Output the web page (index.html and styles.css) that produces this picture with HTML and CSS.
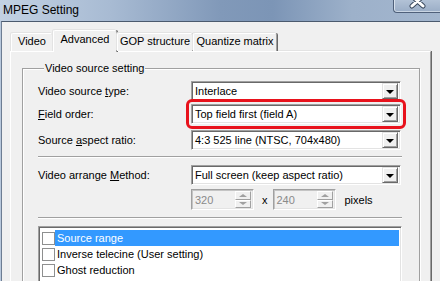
FILE: index.html
```html
<!DOCTYPE html>
<html>

<head>
    <meta charset="UTF-8">
    <meta name="viewport" content="width=device-width, initial-scale=1.0">
    <link rel="stylesheet" href="styles.css">
</head>

<body>
    <div class="window">
        <div class="titlebar">
            <span class="title">MPEG Setting</span>
            <div class="close-btn">
                <svg width="47" height="13" viewBox="0 0 47 13">
                    <path d="M19 -3 L30 7 M30 -3 L19 7" stroke="#3b4a5e" stroke-width="5" stroke-linecap="round" />
                    <path d="M19 -3 L30 7 M30 -3 L19 7" stroke="#fff" stroke-width="3" stroke-linecap="round" />
                </svg>
            </div>
        </div>

        <div class="client">
            <div class="tabs">
                <div class="tab tab-video">Video</div>
                <div class="tab tab-advanced active">Advanced</div>
                <div class="tab tab-gop">GOP structure</div>
                <div class="tab tab-quant">Quantize matrix</div>
            </div>

            <div class="panel">
                <fieldset class="group">
                    <legend>Video source setting</legend>

                    <div class="row row-first">
                        <label>Video source <u>t</u>ype:</label>
                        <div class="combo"><span class="combo-text">Interlace</span><span class="drop"></span></div>
                    </div>
                    <div class="row row-second">
                        <label><u>F</u>ield order:</label>
                        <div class="combo marked"><span class="combo-text">Top field first (field A)</span><span class="drop"></span></div>
                    </div>
                    <div class="row row-third">
                        <label>Source <u>a</u>spect ratio:</label>
                        <div class="combo"><span class="combo-text">4:3 525 line (NTSC, 704x480)</span><span class="drop"></span></div>
                    </div>

                    <div class="sep sep-first"></div>

                    <div class="row row-arrange">
                        <label>Video arrange <u>M</u>ethod:</label>
                        <div class="combo"><span class="combo-text">Full screen (keep aspect ratio)</span><span class="drop"></span></div>
                    </div>
                    <div class="spin-row">
                        <div class="spin"><span class="spin-text">320</span><span class="spin-btns"><span class="up"></span><span class="down"></span></span></div>
                        <span class="times">x</span>
                        <div class="spin"><span class="spin-text">240</span><span class="spin-btns"><span class="up"></span><span class="down"></span></span></div>
                        <span class="unit">pixels</span>
                    </div>

                    <div class="sep sep-second"></div>

                    <div class="list">
                        <div class="item selected"><span class="check"></span><span class="item-text">Source range</span></div>
                        <div class="item"><span class="check"></span><span class="item-text">Inverse telecine (User setting)</span></div>
                        <div class="item"><span class="check"></span><span class="item-text">Ghost reduction</span></div>
                    </div>
                </fieldset>
            </div>
        </div>
    </div>
</body>

</html>
```

FILE: styles.css
```css
html,
body {
    margin: 0;
    padding: 0;
    width: 440px;
    height: 281px;
    overflow: hidden;
}

body {
    font-family: "Liberation Sans", Arial, sans-serif;
    font-size: 11px;
    color: #000;
    background-color: #b8c8dc;
}

.window {
    width: 440px;
    height: 281px;
    display: flex;
    flex-direction: column;
}

/* Title bar (Aero basic look) */
.titlebar {
    height: 21px;
    flex: none;
    display: flex;
    align-items: flex-start;
    background: linear-gradient(to right, #c2d1e3 0%, #a8bbd3 25%, #8199b9 50%, #7c95b6 62%, #9db1ca 80%, #a3b6ce 100%);
}

.title {
    font-size: 12px;
    line-height: 12px;
    margin: 4px 0 0 3px;
    color: #000;
}

.close-btn {
    margin-left: auto;
    width: 47px;
    height: 13px;
    box-sizing: border-box;
    border: 1px solid #4f607a;
    border-top: none;
    border-right: none;
    border-radius: 0 0 0 4px;
    background: linear-gradient(#b2c2d6, #9aadc6);
    box-shadow: inset 1px 0 0 #d7e1ec, inset 0 -1px 0 #c9d5e3;
    overflow: hidden;
}

.close-btn svg {
    display: block;
    margin: -1px 0 0 -1px;
}

/* Client area */
.client {
    flex: 1;
    margin-left: 1px;
    border-left: 1px solid #6d7d93;
    border-top: 1px solid #4b5a6e;
    background-color: #f0f0f0;
    padding-left: 8px;
    padding-right: 9px;
}

/* Tabs */
.tabs {
    display: flex;
    align-items: flex-end;
    height: 21px;
    margin-top: 8px;
    padding-left: 1px;
    position: relative;
    z-index: 1;
}

.tab {
    box-sizing: border-box;
    height: 18px;
    line-height: 15px;
    text-align: center;
    border-top: 1px solid #fff;
    border-left: 1px solid #fff;
    border-right: 1px solid #a0a0a0;
    box-shadow: 1px 0 0 #696969, -1px -1px 0 #e3e3e3;
    border-radius: 2px 2px 0 0;
    background-color: #f0f0f0;
    white-space: nowrap;
}

.tab-video {
    width: 42px;
}

.tab-advanced {
    width: 64px;
}

.tab-gop {
    width: 76px;
}

.tab-quant {
    width: 84px;
}

.tab.active {
    height: 22px;
    margin-bottom: -1px;
    line-height: 15px;
    padding-top: 1px;
}

/* Tab panel */
.panel {
    height: 240px;
    box-sizing: border-box;
    border-top: 1px solid #fff;
    border-left: 1px solid #fff;
    border-right: 1px solid #a0a0a0;
    box-shadow: 1px 0 0 #696969, 0 -1px 0 #e3e3e3;
    padding: 10px 10px 0 11px;
}

/* Group box */
.group {
    margin: 0;
    padding: 6px 15px 0 15px;
    min-width: 0;
    height: 300px;
    border: 1px solid #a0a0a0;
    box-shadow: inset 1px 1px 0 #fff, 1px 1px 0 #fff;
}

.group legend {
    margin-left: 6px;
    padding: 0 1px;
    line-height: 13px;
    background-color: #f0f0f0;
}

/* Label + combo rows */
.row {
    display: grid;
    grid-template-columns: 153px 210px;
    align-items: center;
    height: 20px;
}

.row-second {
    margin-top: 3px;
}

.row-third {
    margin-top: 6px;
}

.row-arrange {
    margin-top: 7px;
}

.row label {
    line-height: 13px;
    padding-top: 1px;
}

.combo {
    box-sizing: border-box;
    height: 20px;
    display: flex;
    align-items: center;
    background-color: #fff;
    border-style: solid;
    border-width: 1px;
    border-color: #a0a0a0 #fff #fff #a0a0a0;
    box-shadow: inset 1px 1px 0 #696969, inset -1px -1px 0 #e3e3e3;
    padding: 2px 2px 2px 3px;
}

.combo.marked {
    outline: 3px solid #e8121c;
    outline-offset: 2px;
    border-radius: 1px;
}

.combo-text {
    flex: 1;
    line-height: 14px;
    white-space: nowrap;
}

.drop {
    flex: none;
    width: 16px;
    height: 16px;
    box-sizing: border-box;
    background-color: #f0f0f0;
    border-style: solid;
    border-width: 1px;
    border-color: #e3e3e3 #696969 #696969 #e3e3e3;
    box-shadow: inset 1px 1px 0 #fff, inset -1px -1px 0 #a0a0a0;
    display: flex;
    align-items: center;
    justify-content: center;
}

.drop::after {
    content: "";
    width: 0;
    height: 0;
    border-left: 4px solid transparent;
    border-right: 4px solid transparent;
    border-top: 4px solid #000;
    margin-top: 1px;
}

/* Separators */
.sep {
    height: 1px;
    width: 364px;
    background-color: #a0a0a0;
    border-bottom: 1px solid #fff;
}

.sep-first {
    margin-top: 6px;
}

.sep-second {
    margin-top: 7px;
}

/* Size spin boxes */
.spin-row {
    display: flex;
    align-items: center;
    margin: 4px 0 0 153px;
    height: 21px;
}

.spin {
    box-sizing: border-box;
    width: 63px;
    height: 21px;
    display: flex;
    align-items: center;
    background-color: #f0f0f0;
    border-style: solid;
    border-width: 1px;
    border-color: #a0a0a0 #fff #fff #a0a0a0;
    box-shadow: inset 1px 1px 0 #c4c4c4, inset -1px -1px 0 #e3e3e3;
    padding: 2px 2px 2px 3px;
}

.spin-text {
    flex: 1;
    color: #8a8a8a;
    line-height: 14px;
}

.spin-btns {
    display: flex;
    flex-direction: column;
    width: 16px;
    height: 17px;
}

.spin-btns span {
    flex: 1;
    box-sizing: border-box;
    border-style: solid;
    border-width: 1px;
    border-color: #fff #a0a0a0 #a0a0a0 #fff;
    background-color: #f0f0f0;
    display: flex;
    align-items: center;
    justify-content: center;
}

.spin-btns .up::after {
    content: "";
    border-left: 4px solid transparent;
    border-right: 4px solid transparent;
    border-bottom: 3px solid #a0a0a0;
}

.spin-btns .down::after {
    content: "";
    border-left: 4px solid transparent;
    border-right: 4px solid transparent;
    border-top: 3px solid #a0a0a0;
}

.times {
    margin: 0 5px 0 8px;
    font-size: 11px;
}

.unit {
    margin-left: 9px;
}

/* Option list */
.list {
    margin-top: 7px;
    width: 364px;
    height: 80px;
    box-sizing: border-box;
    background-color: #fff;
    border-style: solid;
    border-width: 1px;
    border-color: #a0a0a0 #fff #fff #a0a0a0;
    box-shadow: inset 1px 1px 0 #696969, inset -1px 0 0 #e3e3e3;
    padding: 3px 2px 0 2px;
}

.item {
    display: flex;
    align-items: center;
    height: 16px;
}

.check {
    flex: none;
    width: 13px;
    height: 13px;
    box-sizing: border-box;
    border: 1px solid #8e8f8f;
    background-color: #fff;
    margin: 0 0 0 1px;
}

.item-text {
    flex: 1;
    height: 16px;
    line-height: 16px;
    padding-left: 2px;
    white-space: nowrap;
}

.item.selected .item-text {
    background-color: #3399ff;
    color: #fff;
}
```
